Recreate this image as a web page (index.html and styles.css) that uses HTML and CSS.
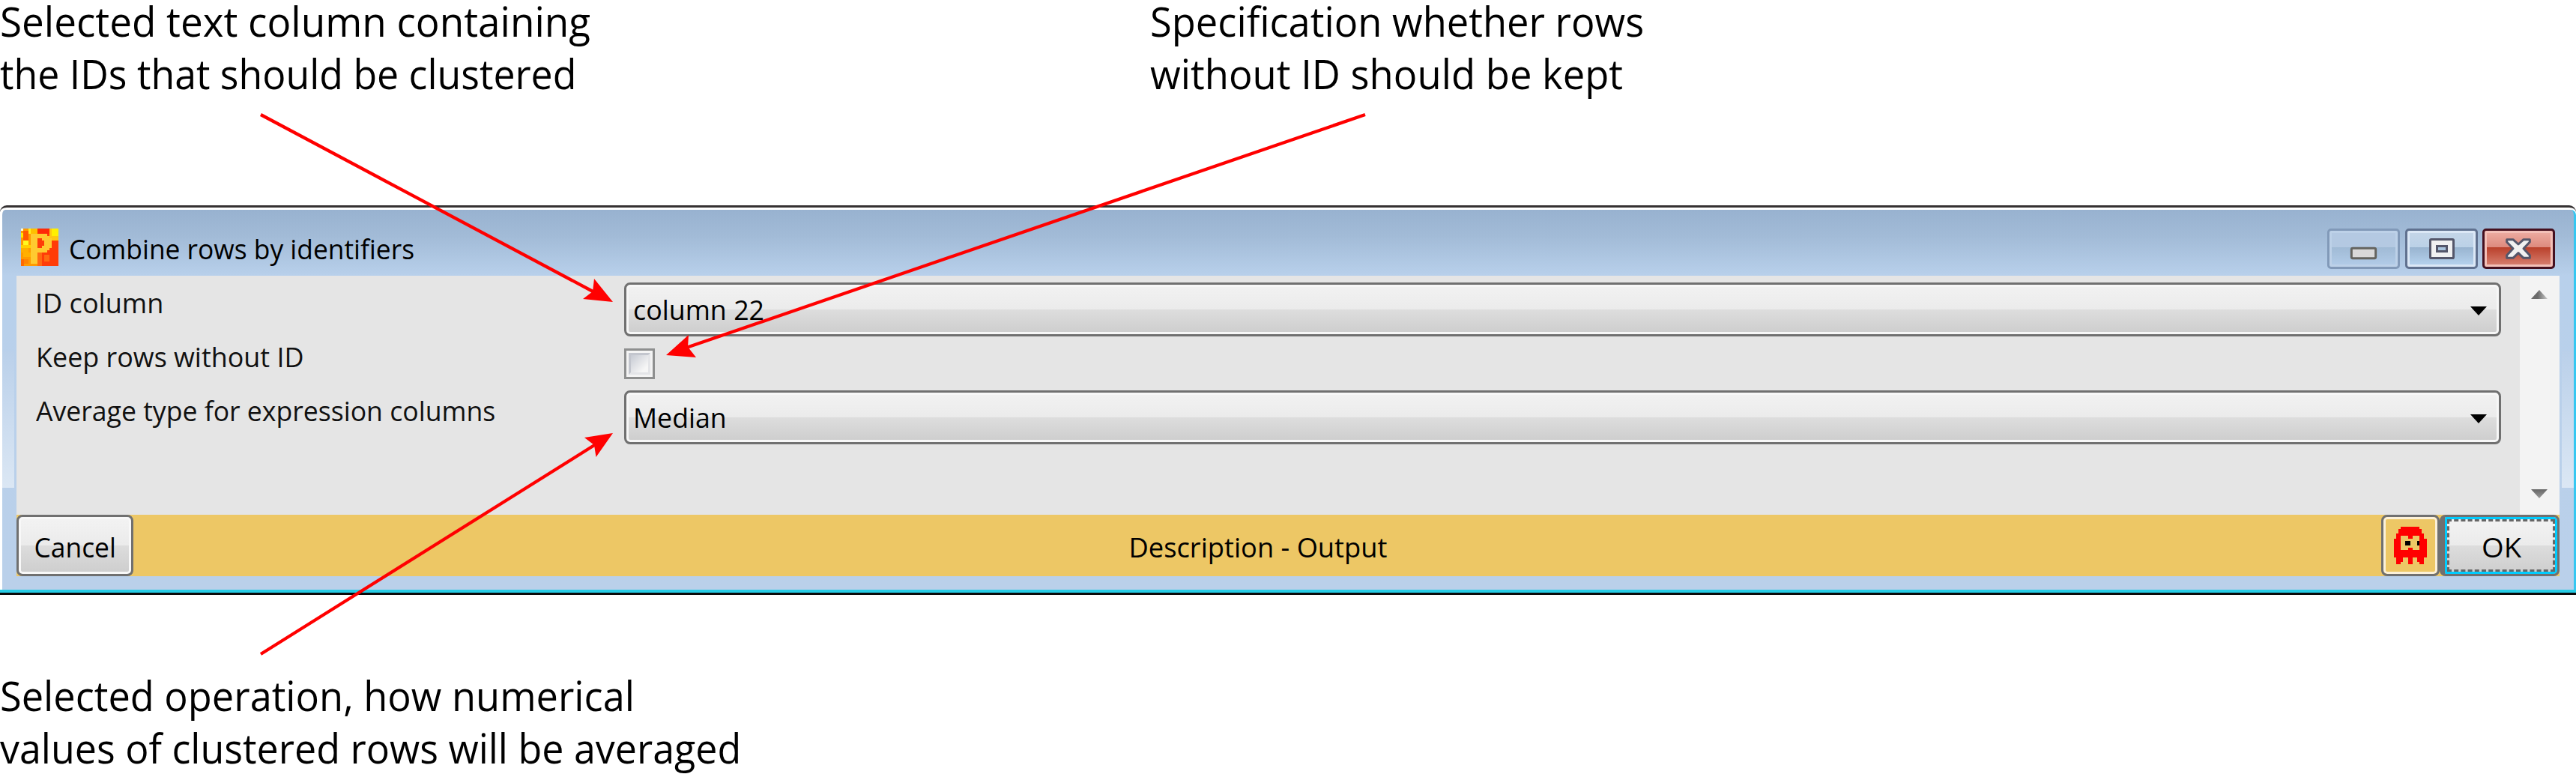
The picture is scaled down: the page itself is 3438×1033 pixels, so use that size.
FILE: index.html
```html
<!DOCTYPE html>
<html lang="en">
<head>
<meta charset="utf-8">
<title>Combine rows by identifiers</title>
<link rel="stylesheet" href="styles.css">
</head>
<body>
<main class="page">
  <header class="notes">
    <p class="note note-id"><span class="line l1">Selected text column containing</span><span class="line l2">the IDs that should be clustered</span></p>
    <p class="note"><span class="line l3">Specification whether rows</span><span class="line l4">without ID should be kept</span></p>
  </header>

  <section class="window">
    <div class="frame">
      <div class="titlebar">
        <svg class="app-icon" viewBox="0 0 50 50" shape-rendering="crispEdges">
          <rect width="50" height="50" fill="#ff9a00"/>
          <rect x="22" width="19" height="50" fill="#ff3c08"/>
          <rect x="26" y="16" width="24" height="34" fill="#ff3c08"/>
          <rect x="13" width="9" height="8" fill="#ffc000"/>
          <rect x="22" width="16" height="7" fill="#ff2a08"/>
          <rect x="3" y="3" width="7" height="13" fill="#ff5a00"/>
          <rect width="3" height="3" fill="#fffbd8"/>
          <rect x="10" width="3" height="7" fill="#ffef20"/>
          <rect y="6" width="3" height="6" fill="#ffe800"/>
          <rect x="3" y="16" width="7" height="6" fill="#fff820"/>
          <rect y="22" width="13" height="4" fill="#ffd000"/>
          <rect y="26" width="10" height="6" fill="#ffae00"/>
          <rect x="3" y="32" width="10" height="6" fill="#ffb000"/>
          <rect y="41" width="4" height="9" fill="#ff6a00"/>
          <rect x="4" y="41" width="6" height="6" fill="#ff8200"/>
          <rect x="38" width="12" height="16" fill="#ffc810"/>
          <rect x="41" width="9" height="10" fill="#fff000"/>
          <rect x="22" y="32" width="6" height="18" fill="#ff6a10"/>
          <rect x="31" y="35" width="7" height="9" fill="#ff6a10"/>
          <path fill="#ffca30" fill-rule="evenodd" d="M13 7H35V10H38V13H41V26H38V29H35V32H22V47H13ZM22 13V26H28V23H31V16H28V13Z"/>
        </svg>
        <h1 class="title"><span class="t-title">Combine rows by identifiers</span></h1>
        <div class="controls">
          <button class="ctl min" aria-label="Minimize"><svg viewBox="198 135 291 162">
            <rect x="295" y="214" width="97" height="40" rx="5" fill="#d9d9d9" stroke="#64645f" stroke-width="9"/></svg></button>
          <button class="ctl max" aria-label="Maximize"><svg viewBox="507 135 291 162">
            <rect x="607.500" y="178.500" width="93" height="75" rx="4" fill="#f0f0f1" stroke="#54566a" stroke-width="9"/>
            <rect x="634.500" y="205.500" width="39" height="21" fill="#a9c4de" stroke="#54566a" stroke-width="9"/></svg></button>
          <button class="ctl close" aria-label="Close"><svg viewBox="819 135 291 162">
            <path d="M917 179H942L963 198L984 179H1009V189L984 215L1009 242V253H984L963 233L942 253H917V242L942 215L917 189Z" fill="#f1f1f1" stroke="#54566a" stroke-width="9" stroke-linejoin="round"/></svg></button>
        </div>
      </div>

      <div class="body">
        <div class="client">
          <div class="pane">
            <form class="form">
              <label class="label r1"><span class="t-id">ID column</span></label>
              <div class="select"><span class="t-col">column 22</span><i class="caret"></i></div>
              <label class="label r2"><span class="t-keep">Keep rows without ID</span></label>
              <div class="check"><i></i></div>
              <label class="label r3"><span class="t-avg">Average type for expression columns</span></label>
              <div class="select"><span class="t-med">Median</span><i class="caret"></i></div>
            </form>
            <div class="scrollbar"><i class="up"></i><i class="down"></i></div>
          </div>
          <footer class="actions">
            <button class="btn cancel"><span class="t-cancel">Cancel</span></button>
            <div class="desc"><span class="t-desc">Description - Output</span></div>
            <button class="btn ghost" aria-label="Ghost"><svg viewBox="291 309 132 150" shape-rendering="crispEdges">
              <path fill="#f00" fill-rule="evenodd" d="M318 309H393V318H402V336H411V357H423V432H411V459H393V450H384V432H366V459H348V432H327V450H318V459H300V432H291V357H300V336H309V318H318ZM318 345V402H348V393H366V402H393V345H366V357H348V345Z"/>
              <path d="M336 366h21v18h-21zM384 366h9v18h-9z"/></svg></button>
            <button class="btn ok"><span class="dash"><span class="t-ok">OK</span></span></button>
          </footer>
        </div>
      </div>
    </div>
    <div class="glow"></div>
  </section>

  <p class="note note-op"><span class="line l5">Selected operation, how numerical</span><span class="line l6">values of clustered rows will be averaged</span></p>

  <svg class="arrows" viewBox="0 0 3438 1033">
    <g stroke="#f00" stroke-width="4.300">
      <path d="M348 153L795 391M1822 153L916 464M348 873L795 593"/>
    </g>
    <g fill="#f00">
      <path d="M818 403L793 372L791 389L778 399Z"/>
      <path d="M889 474L919 447L918 463L929 477Z"/>
      <path d="M818 578L780 584L793 594L795.500 610Z"/>
    </g>
  </svg>
</main>
</body>
</html>
```
FILE: styles.css
```css
* { box-sizing: border-box; }
body { margin: 0; background: #fff; color: #000; font-family: "Open Sans", "Noto Sans", sans-serif; }
.page { position: relative; width: 3438px; height: 1033px; display: flex; flex-direction: column; }
span { display: inline-block; transform-origin: 0 0; }

.notes { height: 274px; flex: none; display: flex; margin-top: -7px; margin-bottom: 7px; }
.note { margin: 0; font-size: 54px; line-height: 70px; white-space: nowrap; }
.note-id { width: 1535px; }
.note-op { margin-top: 99px; }
.line { display: block; width: max-content; }
.l1 { transform: scaleX(.981); }
.l2 { transform: scaleX(.959); }
.l3 { transform: scaleX(.971); }
.l4 { transform: scaleX(.973); }
.l5 { transform: scaleX(.969); }
.l6 { transform: scaleX(.962); }

.window { height: 520px; flex: none; border-top: 3px solid #353132; border-bottom: 3px solid #0a0a0a; border-radius: 9px 9px 0 0; overflow: hidden; font-size: 37px; line-height: 50px; display: flex; flex-direction: column; }
.frame { flex: 1; margin-top: 3px; border-left: 3px solid #fff; border-right: 3px solid #36c7f1; border-radius: 7px 7px 0 0; background: linear-gradient(#98b2d0, #a2bbd7 35px, #b8d0eb 88px, #bad0ea); }
.glow { height: 4px; background: #27cde6; }

.titlebar { height: 88px; display: flex; align-items: flex-start; padding: 25px 25px 0; }
.app-icon { width: 50px; height: 50px; }
.title { flex: 1; margin: 2px 0 0 14px; font-size: 37px; font-weight: 400; line-height: 50px; }
.t-title { transform: scaleX(.956); }
.controls { display: flex; gap: 6.500px; }
.ctl { width: 97px; height: 54px; padding: 0; border: 3px solid; border-radius: 5px; overflow: hidden; background: none; }
.ctl svg { display: block; width: 97px; height: 54px; margin: -3px; }
.min { border-color: #8199b8; box-shadow: inset 0 0 0 3px #bdd1e8; background: linear-gradient(#b4c9e2 0 45%, #a0bad5 45%, #b3cde9); }
.max { border-color: #60718f; box-shadow: inset 0 0 0 3px #dce8f6; background: linear-gradient(#c5d6e8, #bbd1e7 45%, #98b3cf 45%, #b8d5f0); }
.close { border-color: #45101f; box-shadow: inset 0 0 0 3px #f3c0b8; background: linear-gradient(#eeaea4, #dd8a7e 45%, #b93f2a 45%, #d98373); }

.body { height: 401px; padding: 0 19px; background: linear-gradient(#bad0ea, #dbe7f4) 0 100px / 16px 183px no-repeat, linear-gradient(#bad0ea, #dbe7f4) 100% 100px / 16px 183px no-repeat; }
.client { height: 401px; display: flex; flex-direction: column; background: #e5e5e5; }
.pane { height: 319px; display: flex; }
.form { flex: 1; display: grid; grid-template-columns: 787px 2505px; grid-template-rows: 72px 72px 72px; padding: 9px 0 0 24px; align-content: start; }
.label { padding: 2px 0 0 2px; color: #111; }
.r1 { padding-left: 1px; }
.t-id { transform: scaleX(.975); }
.t-keep { transform: scaleX(.97); }
.t-avg { transform: scaleX(.962); }
.t-col { transform: scaleX(.968); }
.t-med { transform: scaleX(.965); }
.select { height: 72px; border: 3px solid #707070; border-radius: 8px; padding: 8px 16px 0 9px; display: flex; justify-content: space-between; background: linear-gradient(#f2f2f2, #ebebeb 50%, #dddddd 50%, #cdcdcd); box-shadow: inset 0 0 0 3px #f7f7f7; }
.caret { width: 22px; height: 12px; margin-top: 21px; background: #000; clip-path: polygon(0 0, 100% 0, 50% 100%); }
.check { width: 41px; height: 41px; margin-top: 16px; border: 3px solid #8e8f8f; background: #f4f4f4; padding: 3px; }
.check i { display: block; height: 29px; border: 3px solid #c3c6ce; border-right-color: #e4e5e8; border-bottom-color: #e4e5e8; background: linear-gradient(135deg, #c6cad3, #f6f6f6 80%); }
.scrollbar { width: 53px; background: #f3f3f3; display: flex; flex-direction: column; justify-content: space-between; padding: 19px 0 22px 15px; }
.scrollbar i { width: 22px; height: 12px; }
.up { background: linear-gradient(90deg, #6a6a6a 40%, #c8c8c8); clip-path: polygon(50% 0, 100% 100%, 0 100%); }
.down { background: linear-gradient(#666, #999); clip-path: polygon(0 0, 100% 0, 50% 100%); }

.actions { height: 82px; display: flex; background: #edc765; }
.btn { height: 82px; border: 3px solid #707070; border-radius: 8px; padding: 0; font: inherit; color: #000; background: linear-gradient(#f3f3f3, #ebebeb 50%, #dddddd 50%, #cdcdcd); }
.cancel { width: 156px; padding-top: 3px; box-shadow: inset 0 0 0 3px #f8f8f8; }
.t-cancel { transform: scaleX(.955); transform-origin: 50% 0; }
.desc { flex: 1; padding: 18px 0 0 2px; text-align: center; }
.t-desc { transform: scaleX(.98); transform-origin: 50% 0; }
.ghost { width: 78px; background: #edc765; box-shadow: inset 0 0 0 3px #fbf0d8; display: flex; justify-content: center; padding-top: 13px; }
.ghost svg { width: 44px; height: 50px; }
.ok { width: 160px; box-shadow: inset 0 0 0 3px #00ccff; padding: 3px; border-left-width: 7px; }
.dash { display: block; height: 70px; border: 3px dashed #666; padding-top: 9px; }
.t-ok { transform: scaleX(1.03); }

.arrows { position: absolute; left: 0; top: 0; width: 3438px; height: 1033px; pointer-events: none; }
```
